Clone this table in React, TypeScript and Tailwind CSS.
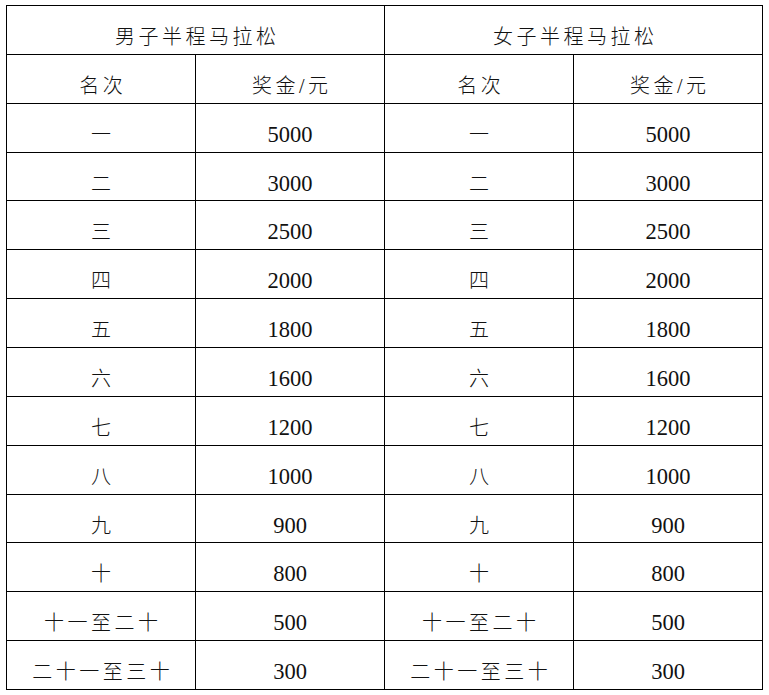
import React from "react";

const ranks = ["一", "二", "三", "四", "五", "六", "七", "八", "九", "十", "十一至二十", "二十一至三十"];
const prizes = ["5000", "3000", "2500", "2000", "1800", "1600", "1200", "1000", "900", "800", "500", "300"];

const cn = "text-[20px] tracking-[3.5px] pl-[3.5px] font-light";
const num = "text-[22.5px]";
const td = "border border-black h-[48.86px] p-0 pt-[14px] text-center align-middle leading-[30px] text-[#111]";

export default function App() {
  return (
    <div
      className="bg-white w-[769px] h-[695px] pt-[5px] pl-[6px]"
      style={{ fontFamily: '"Liberation Serif", "Noto Sans CJK SC", serif' }}
    >
      <table className="border-collapse table-fixed w-[757px]">
        <colgroup>
          <col className="w-[189px]" />
          <col className="w-[189px]" />
          <col className="w-[189px]" />
          <col className="w-[189px]" />
        </colgroup>
        <tbody>
          <tr>
            <td colSpan={2} className={`${td} ${cn}`}>男子半程马拉松</td>
            <td colSpan={2} className={`${td} ${cn}`}>女子半程马拉松</td>
          </tr>
          <tr>
            <td className={`${td} ${cn}`}>名次</td>
            <td className={`${td} ${cn}`}>奖金/元</td>
            <td className={`${td} ${cn}`}>名次</td>
            <td className={`${td} ${cn}`}>奖金/元</td>
          </tr>
          {ranks.map((r, i) => (
            <tr key={r}>
              <td className={`${td} ${cn}`}>{r}</td>
              <td className={`${td} ${num}`}>{prizes[i]}</td>
              <td className={`${td} ${cn}`}>{r}</td>
              <td className={`${td} ${num}`}>{prizes[i]}</td>
            </tr>
          ))}
        </tbody>
      </table>
    </div>
  );
}
